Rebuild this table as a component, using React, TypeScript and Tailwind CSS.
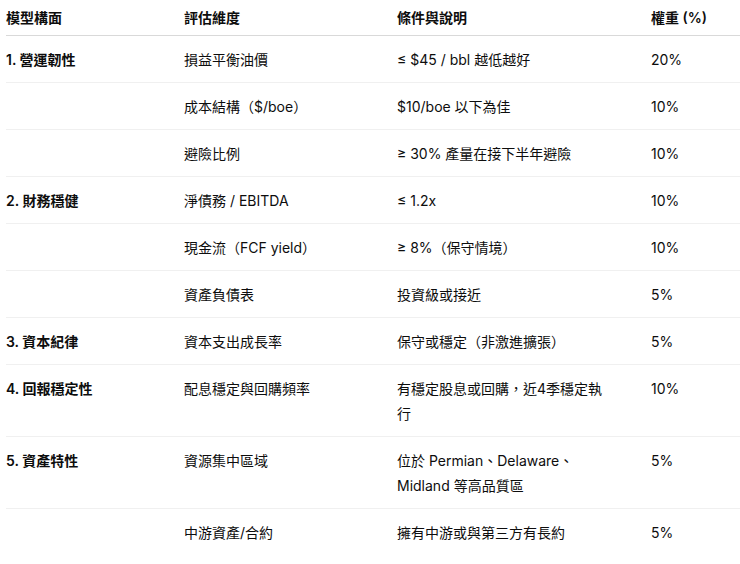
const rows: { group?: string; dim: string; cond: string; weight: string }[] = [
  { group: "1. 營運韌性", dim: "損益平衡油價", cond: "≤ $45 / bbl 越低越好", weight: "20%" },
  { dim: "成本結構（$/boe）", cond: "$10/boe 以下為佳", weight: "10%" },
  { dim: "避險比例", cond: "≥ 30% 產量在接下半年避險", weight: "10%" },
  { group: "2. 財務穩健", dim: "淨債務 / EBITDA", cond: "≤ 1.2x", weight: "10%" },
  { dim: "現金流（FCF yield）", cond: "≥ 8%（保守情境）", weight: "10%" },
  { dim: "資產負債表", cond: "投資級或接近", weight: "5%" },
  { group: "3. 資本紀律", dim: "資本支出成長率", cond: "保守或穩定（非激進擴張）", weight: "5%" },
  { group: "4. 回報穩定性", dim: "配息穩定與回購頻率", cond: "有穩定股息或回購，近4季穩定執行", weight: "10%" },
  { group: "5. 資產特性", dim: "資源集中區域", cond: "位於 Permian、Delaware、Midland 等高品質區", weight: "5%" },
  { dim: "中游資產/合約", cond: "擁有中游或與第三方有長約", weight: "5%" },
];

export default function App() {
  return (
    <div
      className="w-[740px] h-[564px] overflow-hidden bg-white text-[#0d0d0d] text-[14px] leading-[25px]"
      style={{ fontFamily: 'Inter, "Noto Sans CJK TC", sans-serif' }}
    >
      <table className="ml-[6px] w-[734px] table-fixed border-collapse">
        <colgroup>
          <col className="w-[178px]" />
          <col className="w-[213px]" />
          <col className="w-[254px]" />
          <col />
        </colgroup>
        <thead>
          <tr className="border-b border-[#d9d9d9]">
            <th className="text-left font-semibold py-[5px]">模型構面</th>
            <th className="text-left font-semibold py-[5px]">評估維度</th>
            <th className="text-left font-semibold py-[5px]">條件與說明</th>
            <th className="text-left font-semibold py-[5px]">權重 (%)</th>
          </tr>
        </thead>
        <tbody>
          {rows.map((r, i) => (
            <tr key={i} className="border-b border-[#f0f0f0] last:border-b-0 align-top">
              <td className="py-[10.5px] font-semibold">{r.group ?? ""}</td>
              <td className="py-[10.5px] pr-4">{r.dim}</td>
              <td className="py-[10.5px] pr-[44px]">{r.cond}</td>
              <td className="py-[10.5px]">{r.weight}</td>
            </tr>
          ))}
        </tbody>
      </table>
    </div>
  );
}
